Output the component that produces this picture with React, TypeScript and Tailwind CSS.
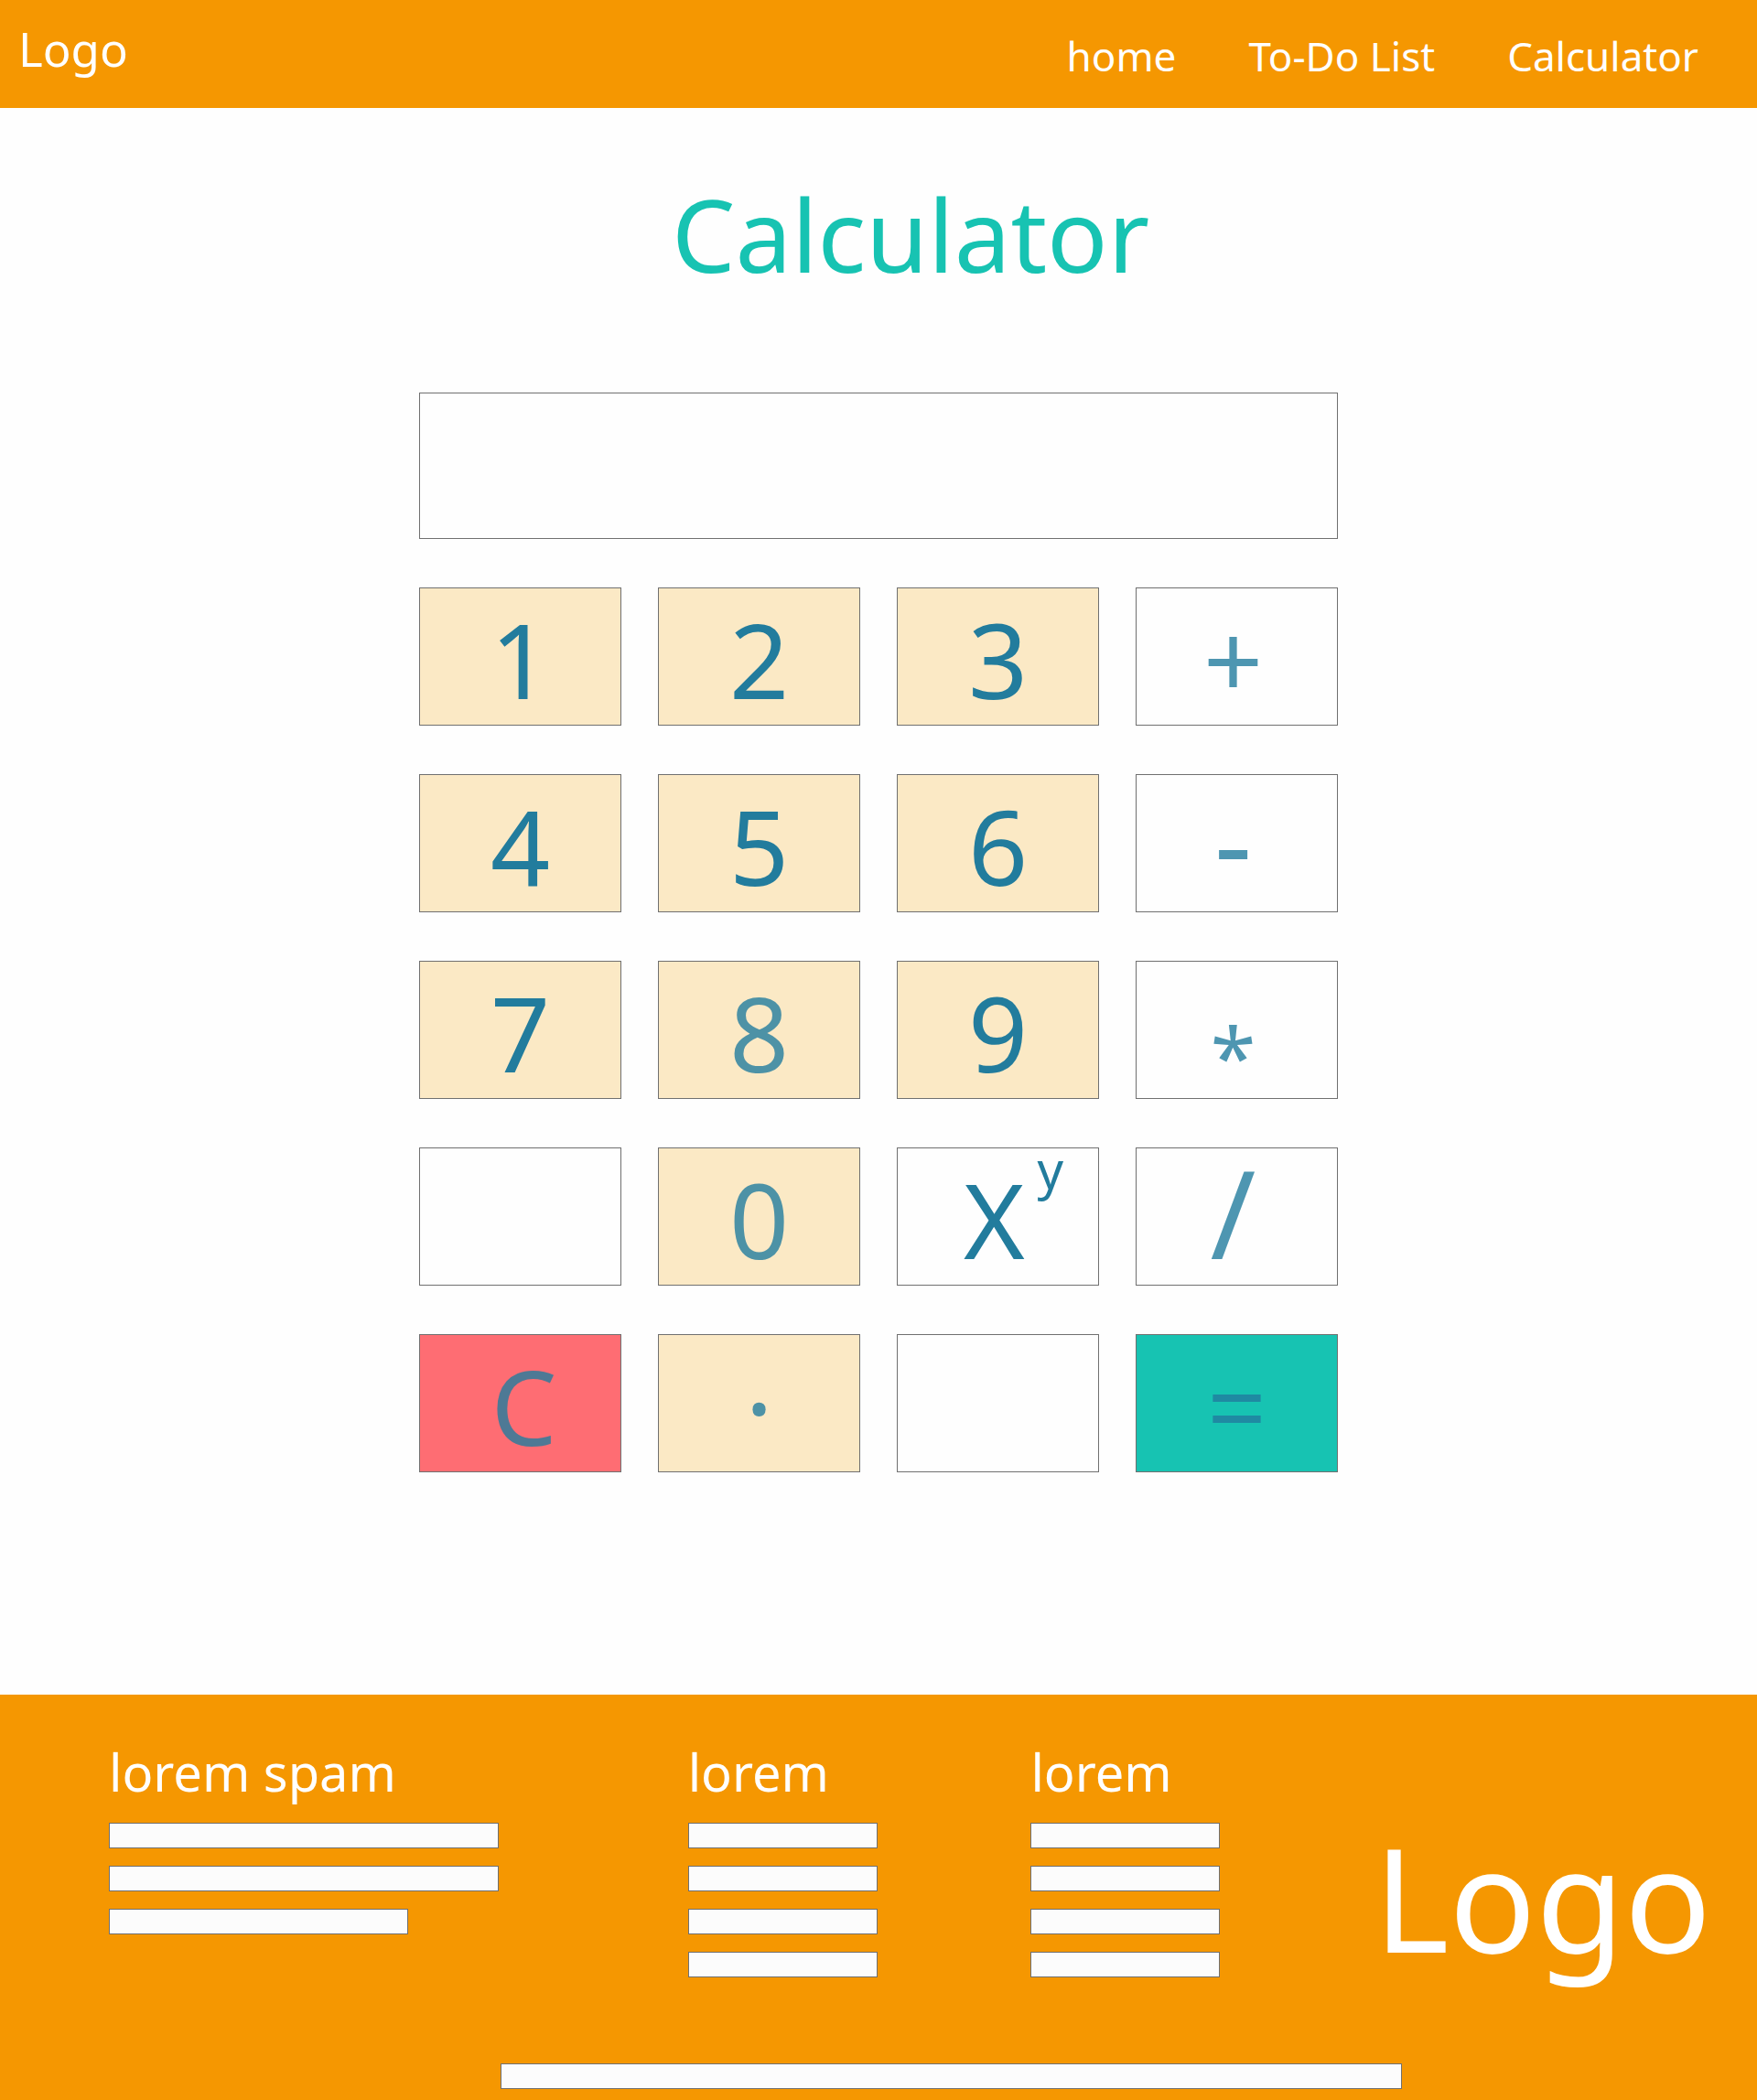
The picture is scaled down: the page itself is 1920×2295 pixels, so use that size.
import { useState } from "react";
import clsx from "clsx";

type Key = { id: string; label: string; tone: string; ink: string; glyph?: string };

const CREAM = "bg-[#fbe9c5]";
const PLAIN = "bg-[#fefefe]";
const SOLID = "text-[#227c9d]";
const FADED = "text-[#227c9d]/80";
const OPERATOR = "text-[#227c9d]/80 pr-2";

const KEYS: Key[] = [
  { id: "1", label: "1", tone: CREAM, ink: SOLID },
  { id: "2", label: "2", tone: CREAM, ink: SOLID },
  { id: "3", label: "3", tone: CREAM, ink: SOLID },
  { id: "+", label: "+", tone: PLAIN, ink: OPERATOR },
  { id: "4", label: "4", tone: CREAM, ink: SOLID },
  { id: "5", label: "5", tone: CREAM, ink: SOLID },
  { id: "6", label: "6", tone: CREAM, ink: SOLID },
  { id: "-", label: "-", tone: PLAIN, ink: OPERATOR, glyph: "text-[128px]" },
  { id: "7", label: "7", tone: CREAM, ink: SOLID },
  { id: "8", label: "8", tone: CREAM, ink: FADED },
  { id: "9", label: "9", tone: CREAM, ink: SOLID },
  { id: "*", label: "*", tone: PLAIN, ink: OPERATOR, glyph: "text-[90px] align-[-16px]" },
  { id: "blank-left", label: "", tone: PLAIN, ink: SOLID },
  { id: "0", label: "0", tone: CREAM, ink: FADED },
  { id: "^", label: "X", tone: PLAIN, ink: "text-[#227c9d] pr-2" },
  { id: "/", label: "/", tone: PLAIN, ink: OPERATOR, glyph: "text-[134px]" },
  { id: "C", label: "C", tone: "bg-[#fe6d73]", ink: "text-[#227c9d]/80 pl-2" },
  { id: ".", label: "·", tone: CREAM, ink: FADED },
  { id: "blank-right", label: "", tone: PLAIN, ink: SOLID },
  { id: "=", label: "=", tone: "bg-[#17c3b2]", ink: FADED },
];

const OPS: Record<string, (a: number, b: number) => number> = {
  "+": (a, b) => a + b,
  "-": (a, b) => a - b,
  "*": (a, b) => a * b,
  "/": (a, b) => a / b,
  "^": (a, b) => a ** b,
};

// Evaluates "a op b"; anything else is left as typed.
function evaluate(text: string): string {
  const m = text.match(/^(-?[\d.]+)([-+*/^])(-?[\d.]+)$/);
  return m ? String(OPS[m[2]](Number(m[1]), Number(m[3]))) : text;
}

function Bar({ width }: { width: string }) {
  return <li className={clsx("h-7 w-full border border-[#707070] bg-[#fcfcfc]", width)} />;
}

function FooterColumn({ title, bars }: { title: string; bars: string[] }) {
  return (
    <section>
      <h2 className="text-[56px] leading-none whitespace-nowrap">{title}</h2>
      <ul className="mt-7 flex flex-col gap-[19px]">
        {bars.map((width, i) => (
          <Bar key={i} width={width} />
        ))}
      </ul>
    </section>
  );
}

export default function App() {
  const [entry, setEntry] = useState("");

  const press = (id: string) => {
    if (id.startsWith("blank")) return;
    if (id === "C") setEntry("");
    else if (id === "=") setEntry(evaluate(entry));
    else setEntry(entry + id);
  };

  return (
    <div className="min-h-screen bg-[#fefefe] font-['Noto_Sans',sans-serif]">
      <header className="flex min-h-[118px] items-start justify-between bg-[#f59701] pt-7 pr-16 pl-5 text-white">
        <a href="#" className="text-[51px] leading-none">
          Logo
        </a>
        <nav className="flex gap-[79px] pt-[11px] text-[44px] leading-none whitespace-nowrap">
          <a href="#home">home</a>
          <a href="#todo">To-Do List</a>
          <a href="#calculator">Calculator</a>
        </nav>
      </header>

      <main className="px-6 pt-[82px] pb-[243px]">
        <h1 className="pl-[70px] text-center text-[110px] leading-none text-[#17c3b2]">Calculator</h1>
        <div className="mx-auto mt-[119px] grid max-w-[1004px] grid-cols-4 gap-x-10 gap-y-[53px]">
          <input
            aria-label="Result"
            readOnly
            value={entry}
            className="col-span-4 h-40 w-full border border-[#707070] bg-[#fefefe] px-8 text-right text-[110px] text-[#227c9d] outline-none"
          />
          {KEYS.map(({ id, label, tone, ink, glyph }) => (
            <button
              key={id}
              type="button"
              aria-label={id}
              onClick={() => press(id)}
              className={clsx(
                "relative h-[151px] border border-[#707070] pt-1 text-center text-[114px] leading-none",
                tone,
                ink,
              )}
            >
              {glyph ? <span className={clsx("leading-[0]", glyph)}>{label}</span> : label}
              {id === "^" && <span className="absolute top-0.5 right-[38px] text-[56px] leading-10">y</span>}
            </button>
          ))}
        </div>
      </main>

      <footer className="bg-[#f59701] pt-14 pr-[50px] pb-3 pl-[119px] text-white">
        <div className="grid grid-cols-[633fr_375fr_375fr_368fr]">
          <FooterColumn title="lorem spam" bars={["max-w-[426px]", "max-w-[426px]", "max-w-[327px]"]} />
          <FooterColumn
            title="lorem"
            bars={["max-w-[207px]", "max-w-[207px]", "max-w-[207px]", "max-w-[207px]"]}
          />
          <FooterColumn
            title="lorem"
            bars={["max-w-[207px]", "max-w-[207px]", "max-w-[207px]", "max-w-[207px]"]}
          />
          <a href="#" className="pt-[87px] text-[157px] leading-none">
            Logo
          </a>
        </div>
        <div className="mt-[94px] ml-[428px] h-7 max-w-[985px] border border-[#707070] bg-[#fcfcfc]" />
      </footer>
    </div>
  );
}
